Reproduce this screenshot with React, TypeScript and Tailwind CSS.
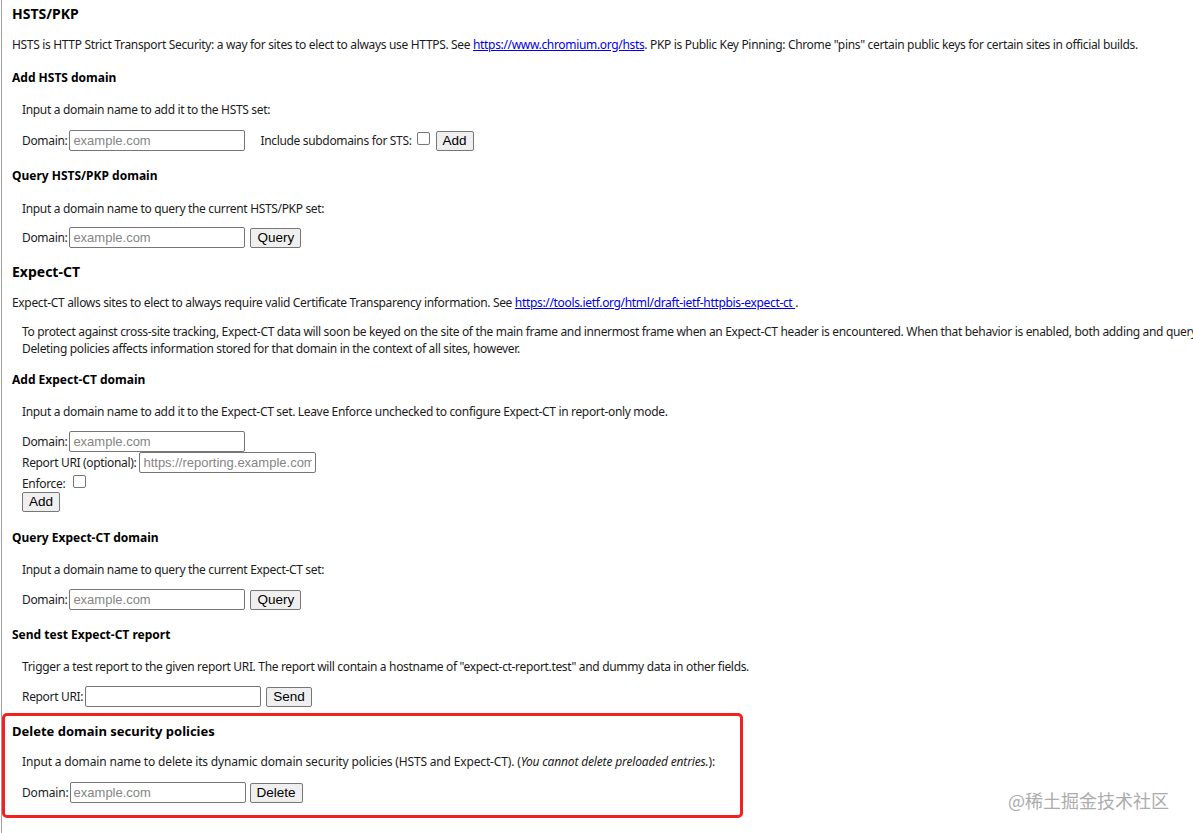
import React from "react";

const Input = ({ placeholder = "", w = "w-[176px]" }: { placeholder?: string; w?: string }) => (
  <input
    readOnly
    placeholder={placeholder}
    className={`${w} h-[21px] border border-[#767676] rounded-[2px] px-[3px] text-[13px] tracking-normal font-['Liberation_Sans',sans-serif] text-black placeholder:text-[#858585] outline-none bg-white`}
  />
);

const Btn = ({ children }: { children: React.ReactNode }) => (
  <button className="h-[20px] px-[6px] bg-[#efefef] border border-[#767676] rounded-[2px] text-[13.5px] leading-[18px] tracking-normal font-['Liberation_Sans',sans-serif] text-black">
    {children}
  </button>
);

const Check = () => (
  <span className="inline-block w-[13px] h-[13px] border border-[#767676] rounded-[2px] bg-white" />
);

const H1 = ({ children, className = "" }: { children: React.ReactNode; className?: string }) => (
  <h1 className={`pl-[10px] text-[14px] leading-[16px] tracking-normal font-bold text-black ${className}`}>{children}</h1>
);

const H2 = ({ children, className = "" }: { children: React.ReactNode; className?: string }) => (
  <h2 className={`pl-[10px] pt-[1px] text-[12px] leading-[16px] tracking-normal font-bold text-black ${className}`}>{children}</h2>
);

export default function App() {
  return (
    <div className="relative w-full min-h-[833px] overflow-hidden bg-white">
      <div className="ml-[1px] min-h-[833px] border-l border-[#a0a0a0] flex flex-col font-['Noto_Sans',sans-serif] text-[12px] leading-[16px] tracking-[-0.33px] text-[#1c1c1c] whitespace-nowrap">
        <H1 className="mt-[6px]">HSTS/PKP</H1>
        <p className="mt-[15px] pl-[10px]">
          HSTS is HTTP Strict Transport Security: a way for sites to elect to always use HTTPS. See{" "}
          <a className="text-[#0000ee] underline">https://www.chromium.org/hsts</a>. PKP is Public Key Pinning: Chrome "pins" certain public keys for certain sites in official builds.
        </p>

        <H2 className="mt-[16px]">Add HSTS domain</H2>
        <p className="mt-[16px] pl-[20px]">Input a domain name to add it to the HSTS set:</p>
        <div className="mt-[12px] pl-[20px] h-[21px] flex items-center">
          <span>Domain:</span>
          <span className="ml-[2px]"><Input placeholder="example.com" /></span>
          <span className="ml-[15px]">Include subdomains for STS:</span>
          <span className="ml-[5px] flex -mt-[5px]"><Check /></span>
          <span className="ml-[6px] flex"><Btn>Add</Btn></span>
        </div>

        <H2 className="mt-[16px]">Query HSTS/PKP domain</H2>
        <p className="mt-[17px] pl-[20px]">Input a domain name to query the current HSTS/PKP set:</p>
        <div className="mt-[10px] pl-[20px] h-[21px] flex items-center">
          <span>Domain:</span>
          <span className="ml-[2px]"><Input placeholder="example.com" /></span>
          <span className="ml-[5px] flex"><Btn>Query</Btn></span>
        </div>

        <H1 className="mt-[16px]">Expect-CT</H1>
        <p className="mt-[15px] pl-[10px]">
          Expect-CT allows sites to elect to always require valid Certificate Transparency information. See{" "}
          <a className="text-[#0000ee] underline">https://tools.ietf.org/html/draft-ietf-httpbis-expect-ct </a>.
        </p>
        <p className="mt-[12px] pl-[20px] leading-[17px]">
          To protect against cross-site tracking, Expect-CT data will soon be keyed on the site of the main frame and innermost frame when an Expect-CT header is encountered. When that behavior is enabled, both adding and querying
          <br />
          Deleting policies affects information stored for that domain in the context of all sites, however.
        </p>

        <H2 className="mt-[14px]">Add Expect-CT domain</H2>
        <p className="mt-[16px] pl-[20px]">Input a domain name to add it to the Expect-CT set. Leave Enforce unchecked to configure Expect-CT in report-only mode.</p>
        <div className="mt-[11px] pl-[20px] h-[21px] flex items-center">
          <span>Domain:</span>
          <span className="ml-[2px]"><Input placeholder="example.com" /></span>
        </div>
        <div className="pl-[20px] h-[21px] flex items-center">
          <span>Report URI (optional):</span>
          <span className="ml-[3px]"><Input placeholder="https://reporting.example.com" w="w-[177px]" /></span>
        </div>
        <div className="mt-[3px] pl-[20px] h-[16px] flex items-center">
          <span>Enforce:</span>
          <span className="ml-[8px] flex -mt-[6px]"><Check /></span>
        </div>
        <div className="pl-[20px] flex">
          <Btn>Add</Btn>
        </div>

        <H2 className="mt-[17px]">Query Expect-CT domain</H2>
        <p className="mt-[16px] pl-[20px]">Input a domain name to query the current Expect-CT set:</p>
        <div className="mt-[11px] pl-[20px] h-[21px] flex items-center">
          <span>Domain:</span>
          <span className="ml-[2px]"><Input placeholder="example.com" /></span>
          <span className="ml-[5px] flex"><Btn>Query</Btn></span>
        </div>

        <H2 className="mt-[16px]">Send test Expect-CT report</H2>
        <p className="mt-[16px] pl-[20px]">
          Trigger a test report to the given report URI. The report will contain a hostname of "expect-ct-report.test" and dummy data in other fields.
        </p>
        <div className="mt-[11px] pl-[20px] h-[21px] flex items-center">
          <span>Report URI:</span>
          <span className="ml-[2px]"><Input /></span>
          <span className="ml-[5px] flex"><Btn>Send</Btn></span>
        </div>

        <div className="mt-[6px] w-[741px] border-[3px] border-[#f3211e] rounded-[5px] pb-[12px] flex flex-col tracking-[-0.16px]">
          <h2 className="mt-[7px] pl-[7px] text-[13px] leading-[16px] tracking-normal font-bold text-black">Delete domain security policies</h2>
          <p className="mt-[15px] pl-[17px]">
            Input a domain name to delete its dynamic domain security policies (HSTS and Expect-CT). (<i>You cannot delete preloaded entries.</i>):
          </p>
          <div className="mt-[12px] pl-[17px] h-[21px] flex items-center">
            <span>Domain:</span>
            <span className="ml-[1px]"><Input placeholder="example.com" /></span>
            <span className="ml-[4px] flex"><Btn>Delete</Btn></span>
          </div>
        </div>
      </div>

      <div className="absolute left-[1008px] top-[787px] text-[18px] leading-[26px] text-[#acacac] font-['Noto_Sans_CJK_SC',sans-serif] [text-shadow:0_0_1px_#ffffff]">
        @稀土掘金技术社区
      </div>
    </div>
  );
}
